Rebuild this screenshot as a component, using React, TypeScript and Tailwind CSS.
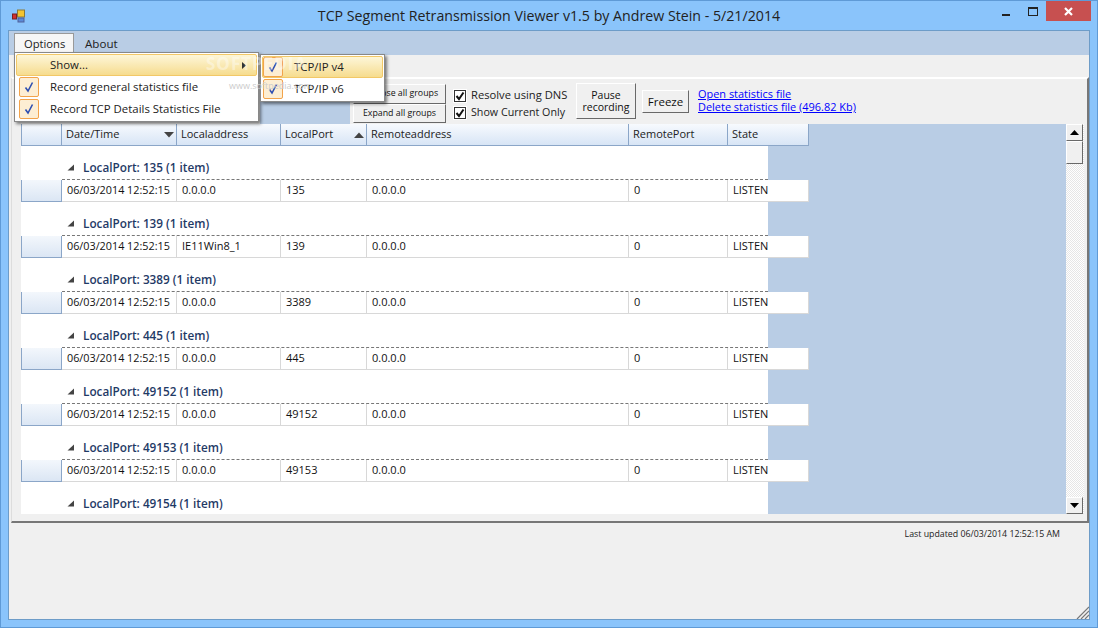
const font = { fontFamily: '"Open Sans", "Noto Sans", sans-serif' }

const columns = [
  { label: "Date/Time", width: "w-[115px]", sort: "down" },
  { label: "Localaddress", width: "w-[104px]" },
  { label: "LocalPort", width: "w-[86px]", sort: "up" },
  { label: "Remoteaddress", width: "w-[262px]" },
  { label: "RemotePort", width: "w-[99px]" },
  { label: "State", width: "w-[81px]" },
]

const groups = [
  { port: "135", address: "0.0.0.0" },
  { port: "139", address: "IE11Win8_1" },
  { port: "3389", address: "0.0.0.0" },
  { port: "445", address: "0.0.0.0" },
  { port: "49152", address: "0.0.0.0" },
  { port: "49153", address: "0.0.0.0" },
  { port: "49154", address: "0.0.0.0" },
]

function Check() {
  return (
    <div className="flex h-5 w-5 shrink-0 items-center justify-center rounded-[2px] border border-[#f2a34b] bg-[#fdeed3]">
      <svg width="12" height="12" viewBox="0 0 12 12" fill="none">
        <path d="M2.5 6.5 L5 10 L9.5 1.5" stroke="#2f4fb0" strokeWidth="1.6" />
      </svg>
    </div>
  )
}

function ClassicButton({ className, children }: { className: string; children: React.ReactNode }) {
  return (
    <div
      className={`flex items-center justify-center border border-t-white border-l-white border-r-[#696969] border-b-[#696969] bg-[#f0f0f0] text-center text-[#111] ${className}`}
    >
      {children}
    </div>
  )
}

function CheckBox({ label, className }: { label: string; className: string }) {
  return (
    <div className={`flex h-[17px] items-center gap-[5px] whitespace-nowrap ${className}`}>
      <div className="flex h-[12px] w-[12px] items-center justify-center border border-[#333] bg-white outline outline-white">
        <svg width="10" height="10" viewBox="0 0 10 10" fill="none">
          <path d="M1.5 5 L4 8 L8.5 1.5" stroke="#111" strokeWidth="2" />
        </svg>
      </div>
      <span>{label}</span>
    </div>
  )
}

function Grid() {
  return (
    <div className="h-[390px] min-w-0 flex-1 overflow-hidden bg-[#b9cde5]">
      <div className="flex h-[22px] w-[788px] bg-gradient-to-b from-[#f7fafe] to-[#d6e4f5] text-[11px] text-[#222]">
        <div className="w-[41px] border-r border-b border-l border-[#8ba6c8]" />
        {columns.map((c) => (
          <div
            key={c.label}
            className={`flex items-center justify-between border-r border-b border-[#8ba6c8] pr-[2px] pl-[4px] ${c.width}`}
          >
            <span>{c.label}</span>
            {c.sort === "down" && (
              <svg width="10" height="6" viewBox="0 0 10 6">
                <path d="M0 0 H10 L5 5.5 Z" fill="#444" />
              </svg>
            )}
            {c.sort === "up" && (
              <svg width="10" height="6" viewBox="0 0 10 6">
                <path d="M0 6 H10 L5 0.5 Z" fill="#444" />
              </svg>
            )}
          </div>
        ))}
      </div>
      {groups.map((g) => (
        <div key={g.port} className="w-[788px]">
          <div className="flex h-[34px] w-[747px] flex-col bg-white">
            <div className="flex flex-1 items-center gap-[9px] pt-[10px] pl-[46px] text-[11.75px] font-semibold text-[#1f3a66]">
              <svg width="7" height="7" viewBox="0 0 7 7">
                <path d="M7 0.5 V6.5 H0.5 Z" fill="#444" />
              </svg>
              <span>
                LocalPort: {g.port} (1 item)
              </span>
            </div>
            <div className="ml-[41px] border-t border-dashed border-[#777]" />
          </div>
          <div className="flex h-[22px] bg-white text-[11px] text-[#111]">
            <div className="w-[41px] border-r border-b border-l border-[#8ba6c8] bg-gradient-to-b from-[#f3f7fc] to-[#dbe6f4]" />
            <div className="flex flex-1 border-b border-[#d8d8d8]">
              <div className="flex w-[115px] items-center border-r border-[#d8d8d8] pl-[5px] text-[10.8px] whitespace-nowrap">06/03/2014 12:52:15</div>
              <div className="flex w-[104px] items-center border-r border-[#d8d8d8] pl-[5px]">{g.address}</div>
              <div className="flex w-[86px] items-center border-r border-[#d8d8d8] pl-[5px]">{g.port}</div>
              <div className="flex w-[262px] items-center border-r border-[#d8d8d8] pl-[5px]">0.0.0.0</div>
              <div className="flex w-[99px] items-center border-r border-[#d8d8d8] pl-[5px]">0</div>
              <div className="flex w-[81px] items-center border-r border-[#d8d8d8] pl-[5px]">LISTEN</div>
            </div>
          </div>
        </div>
      ))}
    </div>
  )
}

function Scrollbar() {
  return (
    <div className="flex h-[390px] w-[18px] shrink-0 flex-col bg-[repeating-conic-gradient(#ffffff_0_25%,#e6e6e6_0_50%)] bg-[length:2px_2px]">
      <ClassicButton className="h-[17px] w-[17px]">
        <svg width="9" height="5" viewBox="0 0 9 5">
          <path d="M0 5 H9 L4.5 0 Z" fill="#000" />
        </svg>
      </ClassicButton>
      <ClassicButton className="h-[23px] w-[17px]">{null}</ClassicButton>
      <div className="flex-1" />
      <ClassicButton className="h-[17px] w-[17px]">
        <svg width="9" height="5" viewBox="0 0 9 5">
          <path d="M0 0 H9 L4.5 5 Z" fill="#000" />
        </svg>
      </ClassicButton>
    </div>
  )
}

export default function App() {
  return (
    <div
      className="relative flex h-[628px] w-[1098px] flex-col overflow-hidden border border-[#5f9ad6] bg-[#8ac4fb] text-[#222]"
      style={font}
    >
      {/* title bar */}
      <div className="relative flex h-[29px] shrink-0 items-center justify-center">
        <svg className="absolute top-[8px] left-[11px]" width="14" height="14" viewBox="0 0 14 14">
          <rect x="5.5" y="1" width="7" height="7" fill="#f4c430" stroke="#8a7a3a" />
          <rect x="0.5" y="5" width="4" height="5" fill="#d23030" stroke="#7a2020" />
          <rect x="6" y="9" width="6" height="4" fill="#5a8ad8" stroke="#50609a" />
        </svg>
        <span className="text-[14.2px] text-[#222]">TCP Segment Retransmission Viewer v1.5 by Andrew Stein - 5/21/2014</span>
        <div className="absolute top-0 right-[6px] flex shrink-0 items-start">
          <div className="mt-[13px] mr-[18px] h-[2px] w-[8px] shrink-0 bg-[#222]" />
          <div className="mt-[6px] mr-[8px] h-[9px] w-[10px] shrink-0 border border-t-2 border-[#222]" />
          <div className="flex h-[20px] w-[45px] shrink-0 items-center justify-center bg-[#c75050]">
            <svg width="9" height="9" viewBox="0 0 9 9">
              <path d="M1 1 L8 8 M8 1 L1 8" stroke="#fff" strokeWidth="2.2" />
            </svg>
          </div>
        </div>
      </div>

      {/* client area */}
      <div className="mx-[7px] flex h-[590px] flex-col border border-[#6d9cc8] bg-[#f0f0f0]">
        <div className="flex h-[24px] shrink-0 items-end bg-[#b9cde5] pl-[6px] text-[11.6px]">
          <div className="h-[21px] w-[60px]" />
          <span className="mb-[3px] ml-[10px]">About</span>
        </div>
        <div className="h-[22px] shrink-0" />

        <div className="ml-[2px] flex h-[446px] w-[1078px] shrink-0 flex-col border-t-2 border-r-2 border-b-2 border-l border-t-[#fff] border-r-[#777] border-b-[#777] border-l-[#ddd]">
          {/* toolbar */}
          <div className="flex h-[45px] shrink-0 items-start">
            <div className="mt-[21px] ml-[248px] h-[24px] w-[90px] bg-[#b9cde5]" />
            <div className="mt-[5px] ml-[3px] flex flex-col text-[8.8px]">
              <ClassicButton className="h-[20px] w-[93px]">Collapse all groups</ClassicButton>
              <ClassicButton className="h-[19px] w-[93px]">Expand all groups</ClassicButton>
            </div>
            <div className="mt-[8px] ml-[8px] flex w-[122px] flex-col">
              <CheckBox label="Resolve using DNS" className="text-[11.2px]" />
              <CheckBox label="Show Current Only" className="text-[10.7px]" />
            </div>
            <ClassicButton className="mt-[4px] h-[36px] w-[60px] text-[10.5px] leading-[12px]">
              Pause
              <br />
              recording
            </ClassicButton>
            <ClassicButton className="mt-[11px] ml-[6px] h-[23px] w-[47px] text-[11.5px]">Freeze</ClassicButton>
            <div className="mt-[8px] ml-[9px] flex flex-col text-[10.95px] leading-[13px] whitespace-nowrap text-[#0000ff] underline">
              <span>Open statistics file</span>
              <span>Delete statistics file (496.82 Kb)</span>
            </div>
          </div>
          {/* grid */}
          <div className="flex pr-[3px] pl-[9px]">
            <Grid />
            <Scrollbar />
          </div>
        </div>

        <div className="mt-[5px] pr-[29px] text-right text-[8.8px] text-[#222]">Last updated 06/03/2014 12:52:15 AM</div>
      </div>

      {/* resize grip */}
      <svg className="absolute right-[8px] bottom-[8px]" width="13" height="13" viewBox="0 0 13 13">
        <path d="M1 13 L13 1 M5 13 L13 5 M9 13 L13 9" stroke="#777" strokeWidth="1.2" />
      </svg>

      {/* open menu */}
      <div className="absolute top-[32px] left-[13px] z-10 h-[22px] w-[60px] border border-b-0 border-[#999] bg-[#f6f6f6] pl-[9px] text-[11.2px] leading-[20px]">
        Options
      </div>
      <div className="absolute top-[51px] left-[13px] z-10 flex w-[245px] flex-col border border-[#888] bg-white p-[1px] text-[11.4px] shadow-[2px_2px_3px_rgba(0,0,0,0.5)]">
        <div className="flex h-[22px] items-center justify-between rounded-[2px] border border-[#f2c867] bg-gradient-to-b from-[#fdf6d8] to-[#f6dc8e] pr-[10px] pl-[33px]">
          <span>Show...</span>
          <svg width="4" height="7" viewBox="0 0 4 7">
            <path d="M0 0 L4 3.5 L0 7 Z" fill="#333" />
          </svg>
        </div>
        <div className="flex h-[22px] items-center gap-[11px] pl-[3px]">
          <Check />
          <span>Record general statistics file</span>
        </div>
        <div className="flex h-[22px] items-center gap-[11px] pl-[3px]">
          <Check />
          <span>Record TCP Details Statistics File</span>
        </div>
      </div>
      <div className="absolute top-[53px] left-[259px] z-20 flex w-[125px] flex-col border border-[#888] bg-white p-[1px] text-[11.4px] shadow-[2px_2px_3px_rgba(0,0,0,0.5)]">
        <div className="flex h-[22px] items-center gap-[11px] rounded-[2px] border border-[#f2c867] bg-gradient-to-b from-[#fdf6d8] to-[#f6dc8e]">
          <Check />
          <span>TCP/IP v4</span>
        </div>
        <div className="flex h-[22px] items-center gap-[11px] pl-[1px]">
          <Check />
          <span>TCP/IP v6</span>
        </div>
      </div>

      {/* watermark */}
      <div className="absolute top-[50px] left-[205px] z-30 text-[17px] font-bold tracking-[1px] text-white/40">SOFTPEDIA</div>
      <div className="absolute top-[78px] left-[228px] z-30 text-[9px] text-[#ccc]">www.softpedia.com</div>
    </div>
  )
}
